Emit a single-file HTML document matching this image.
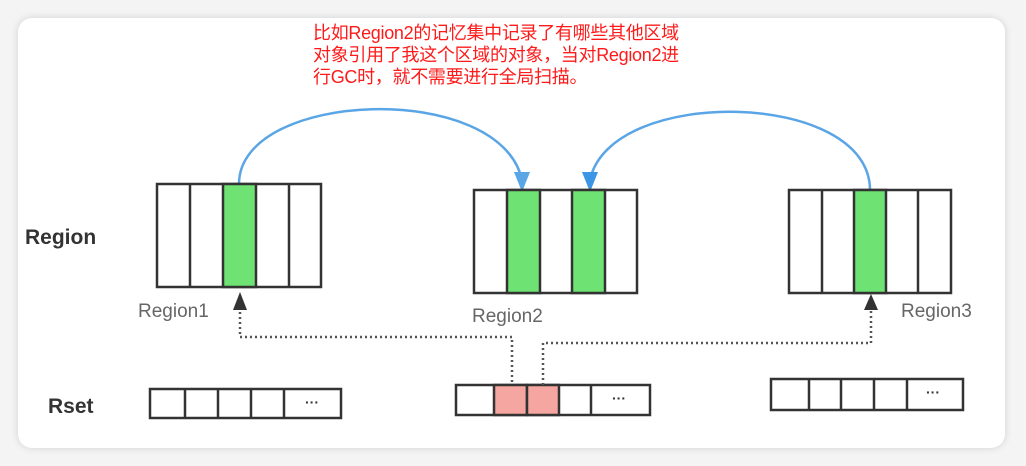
<!DOCTYPE html>
<html><head><meta charset="utf-8"><style>
body{margin:0;width:1026px;height:466px;background:#f4f4f4;overflow:hidden;font-family:"Liberation Sans","Noto Sans CJK SC",sans-serif}
.card{position:absolute;left:18px;top:18px;width:987px;height:430px;background:#fff;border-radius:14px;box-shadow:0 0 8px rgba(0,0,0,.14)}
.note{position:absolute;left:313px;top:22px;color:#ff1a1a;font-size:18px;line-height:22px;width:400px;letter-spacing:-0.3px;font-family:"Liberation Sans","Noto Sans CJK SC",sans-serif}
</style></head><body>
<div class="card"></div>
<div class="note">比如Region2的记忆集中记录了有哪些其他区域<br>对象引用了我这个区域的对象，当对Region2进<br>行GC时，就不需要进行全局扫描。</div>
<svg width="1026" height="466" style="position:absolute;left:0;top:0">
<g fill="none" stroke="#5aa5e6" stroke-width="2.5">
<path d="M239 184 C239 90 500 80 522 180"/>
<path d="M870 190 C870 90 610 85 590 180"/>
</g>
<polygon points="514,172 530,172 522,192" fill="#5aa5e6"/>
<polygon points="582,172 598,172 590,192" fill="#3d95e6"/>
<g stroke="#333" stroke-width="2.5">
<rect x="157" y="184" width="164" height="103" fill="#fff"/>
<rect x="223" y="184" width="33" height="103" fill="#6ee272"/>
<line x1="190" y1="184" x2="190" y2="287"/><line x1="289" y1="184" x2="289" y2="287"/>
<rect x="474" y="190" width="163" height="103" fill="#fff"/>
<rect x="507" y="190" width="33" height="103" fill="#6ee272"/>
<rect x="572" y="190" width="33" height="103" fill="#6ee272"/>
<rect x="789" y="190" width="162" height="103" fill="#fff"/>
<rect x="854" y="190" width="32" height="103" fill="#6ee272"/>
<line x1="822" y1="190" x2="822" y2="293"/><line x1="918" y1="190" x2="918" y2="293"/>
<rect x="150" y="389" width="191" height="29" fill="#fff"/>
<line x1="185" y1="389" x2="185" y2="418"/><line x1="218" y1="389" x2="218" y2="418"/><line x1="251" y1="389" x2="251" y2="418"/><line x1="284" y1="389" x2="284" y2="418"/>
<rect x="456" y="385" width="194" height="30" fill="#fff"/>
<rect x="494" y="385" width="33" height="30" fill="#f6a6a0"/>
<rect x="527" y="385" width="32" height="30" fill="#f6a6a0"/>
<line x1="591" y1="385" x2="591" y2="415"/>
<rect x="771" y="379" width="192" height="31" fill="#fff"/>
<line x1="809" y1="379" x2="809" y2="410"/><line x1="841" y1="379" x2="841" y2="410"/><line x1="874" y1="379" x2="874" y2="410"/><line x1="907" y1="379" x2="907" y2="410"/>
</g>
<g fill="none" stroke="#555" stroke-width="2.5" stroke-dasharray="2 3">
<path d="M240 302 V337 H512 V385"/>
<path d="M543 385 V343 H871 V306"/>
</g>
<polygon points="233,310 247,310 240,292" fill="#333"/>
<polygon points="864,310 878,310 871,294" fill="#333"/>
<g font-size="19" fill="#666">
<text x="138" y="317">Region1</text><text x="472" y="322">Region2</text><text x="901" y="317">Region3</text>
</g>
<g font-size="14" fill="#333" font-weight="bold">
<text x="305" y="407">···</text><text x="612" y="403">···</text><text x="926" y="397">···</text>
</g>
<g font-size="21" font-weight="bold" fill="#333">
<text x="25" y="244">Region</text><text x="48" y="413">Rset</text>
</g>
</svg>
</body></html>
